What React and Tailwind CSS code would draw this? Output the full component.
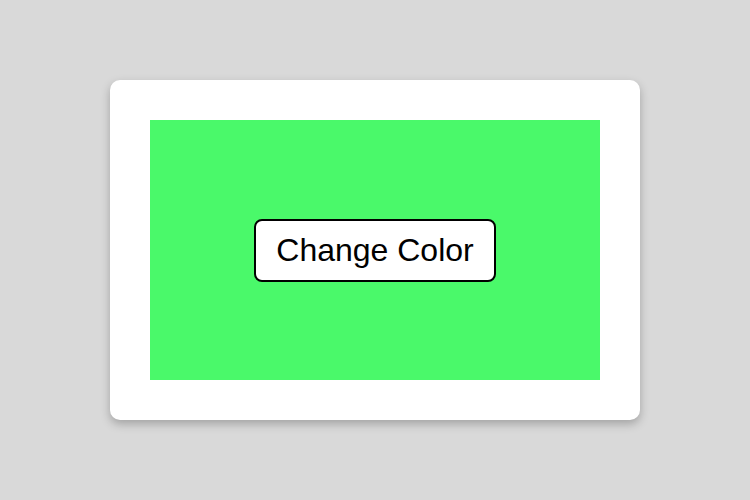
export default function App() {
  return (
    <div className="w-[750px] h-[500px] bg-[#d9d9d9] flex items-center justify-center" style={{ fontFamily: '"Liberation Sans", Arial, sans-serif' }}>
      <div className="bg-white rounded-[10px] p-10 shadow-[0_4px_10px_rgba(0,0,0,0.25)]">
        <div className="w-[450px] h-[260px] bg-[#4af96a] flex items-center justify-center">
          <button className="bg-white border-2 border-black rounded-[8px] px-5 pt-[11px] pb-[12px] text-[32px] leading-[36px] text-black">
            Change Color
          </button>
        </div>
      </div>
    </div>
  );
}
